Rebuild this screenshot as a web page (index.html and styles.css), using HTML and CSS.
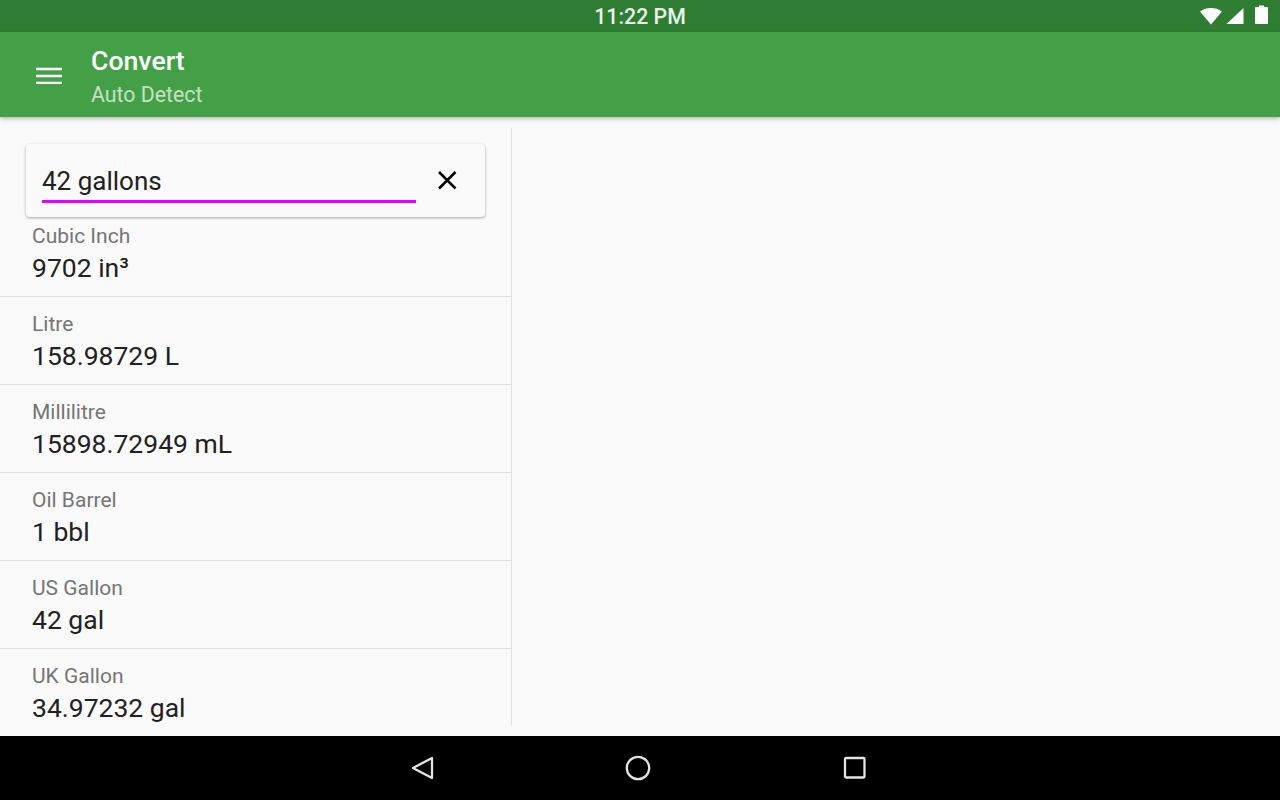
FILE: index.html

```html
<!DOCTYPE html>
<html lang="en">
<head>
  <meta charset="UTF-8">
  <title>Convert</title>
  <link rel="stylesheet" href="styles.css">
</head>
<body>
  <div class="status-bar">
    <span class="status-time">11:22 PM</span>
    <div class="status-icons">
      <svg class="icon-wifi" width="24" height="20" viewBox="0 0 24 20"><path d="M1 6.500C4.200 4 8 3 12 3s7.800 1 11 3.500L12 19.500z" fill="#fff"/></svg>
      <svg class="icon-signal" width="18" height="20" viewBox="0 0 18 20"><path d="M17.500 3v16H0.500z" fill="#fff"/></svg>
      <svg class="icon-battery" width="14" height="20" viewBox="0 0 14 20"><path d="M4 2V0.500h5V2h3a1 1 0 0 1 1 1v15a1 1 0 0 1-1 1H1a1 1 0 0 1-1-1V3a1 1 0 0 1 1-1z" fill="#fff"/></svg>
    </div>
  </div>

  <header class="toolbar">
    <svg class="menu-icon" width="26" height="18" viewBox="0 0 26 18"><path d="M0 1.800h26v2.400H0zM0 8.800h26v2.400H0zM0 15.800h26v2.400H0z" fill="#fff"/></svg>
    <div class="toolbar-titles">
      <div class="toolbar-title">Convert</div>
      <div class="toolbar-subtitle">Auto Detect</div>
    </div>
  </header>

  <main class="content">
    <section class="list-pane">
      <div class="search-card">
        <div class="search-input">42 gallons</div>
        <svg class="clear-icon" width="20" height="20" viewBox="0 0 20 20"><path d="M2 2l16.500 16.500M18.500 2L2 18.500" stroke="#000" stroke-width="2.500" fill="none"/></svg>
      </div>
      <div class="result first">
        <div class="result-label">Cubic Inch</div>
        <div class="result-value">9702 in³</div>
      </div>
      <div class="result">
        <div class="result-label">Litre</div>
        <div class="result-value">158.98729 L</div>
      </div>
      <div class="result">
        <div class="result-label">Millilitre</div>
        <div class="result-value">15898.72949 mL</div>
      </div>
      <div class="result">
        <div class="result-label">Oil Barrel</div>
        <div class="result-value">1 bbl</div>
      </div>
      <div class="result">
        <div class="result-label">US Gallon</div>
        <div class="result-value">42 gal</div>
      </div>
      <div class="result last">
        <div class="result-label">UK Gallon</div>
        <div class="result-value">34.97232 gal</div>
      </div>
    </section>
    <div class="pane-divider"></div>
  </main>

  <nav class="nav-bar">
    <svg width="26" height="26" viewBox="0 0 26 26"><path d="M23 3v20L4 13z" fill="none" stroke="#e4e4e4" stroke-width="2.300" stroke-linejoin="round"/></svg>
    <svg width="26" height="26" viewBox="0 0 26 26"><circle cx="13" cy="13" r="11.200" fill="none" stroke="#e4e4e4" stroke-width="2.300"/></svg>
    <svg width="26" height="26" viewBox="0 0 26 26"><rect x="4" y="3" width="19.500" height="19.500" rx="1" fill="none" stroke="#e4e4e4" stroke-width="2.300"/></svg>
  </nav>
</body>
</html>
```

FILE: styles.css

```css
html, body {
  margin: 0;
  height: 100%;
}
body {
  width: 1280px;
  height: 800px;
  overflow: hidden;
  display: flex;
  flex-direction: column;
  font-family: Roboto, sans-serif;
  background: #fafafa;
  color: #212121;
}
.status-bar {
  height: 32px;
  flex: none;
  background: #2e7d32;
  display: flex;
  align-items: center;
  justify-content: center;
  position: relative;
}
.status-time {
  color: #fff;
  font-size: 21.330px;
  font-weight: 500;
  opacity: .9;
  margin-top: 1px;
}
.status-icons {
  position: absolute;
  top: 5px;
  right: 11px;
  display: flex;
  align-items: flex-start;
  gap: 3px;
}
.icon-battery {
  margin-left: 8px;
}
.toolbar {
  height: 85px;
  flex: none;
  background: #43a047;
  display: flex;
  align-items: center;
  padding-left: 36px;
  box-shadow: 0 2px 4px rgba(0, 0, 0, .25);
  position: relative;
  z-index: 1;
}
.menu-icon {
  margin-right: 29px;
  margin-top: 1px;
}
.toolbar-titles {
  margin-top: 6px;
}
.toolbar-title {
  color: #fff;
  font-size: 26.670px;
  font-weight: 500;
  line-height: 32px;
}
.toolbar-subtitle {
  color: rgba(255, 255, 255, .7);
  font-size: 21.330px;
  line-height: 30px;
  margin-top: 3px;
}
.content {
  flex: 1;
  display: flex;
  min-height: 0;
}
.list-pane {
  width: 511px;
  flex: none;
  overflow: hidden;
}
.pane-divider {
  width: 1px;
  margin: 11px 0 11px;
  background: #e0e0e0;
}
.search-card {
  height: 73px;
  margin: 27px 26px 0;
  box-sizing: border-box;
  background: #fafafa;
  border-radius: 4px;
  box-shadow: 0 1px 3px rgba(0, 0, 0, .35);
  display: flex;
  align-items: flex-start;
  padding: 21px 28px 0 16px;
}
.search-input {
  flex: 1;
  height: 38px;
  font-size: 26px;
  line-height: 33px;
  box-sizing: border-box;
  border-bottom: 3px solid #e600ff;
}
.clear-icon {
  margin-left: 21px;
  margin-top: 5px;
}
.result {
  height: 88px;
  box-sizing: border-box;
  padding: 14px 32px 0;
  border-bottom: 1px solid #e0e0e0;
}
.result.first {
  height: 80px;
  padding-top: 6px;
}
.result.last {
  border-bottom: 0;
}
.result-label {
  color: #757575;
  font-size: 21px;
  line-height: 27px;
}
.result-value {
  font-size: 26.500px;
  line-height: 36px;
}
.nav-bar {
  height: 64px;
  flex: none;
  background: #000;
  display: flex;
  align-items: center;
  justify-content: center;
  gap: 190px;
  padding-right: 5px;
}
```
